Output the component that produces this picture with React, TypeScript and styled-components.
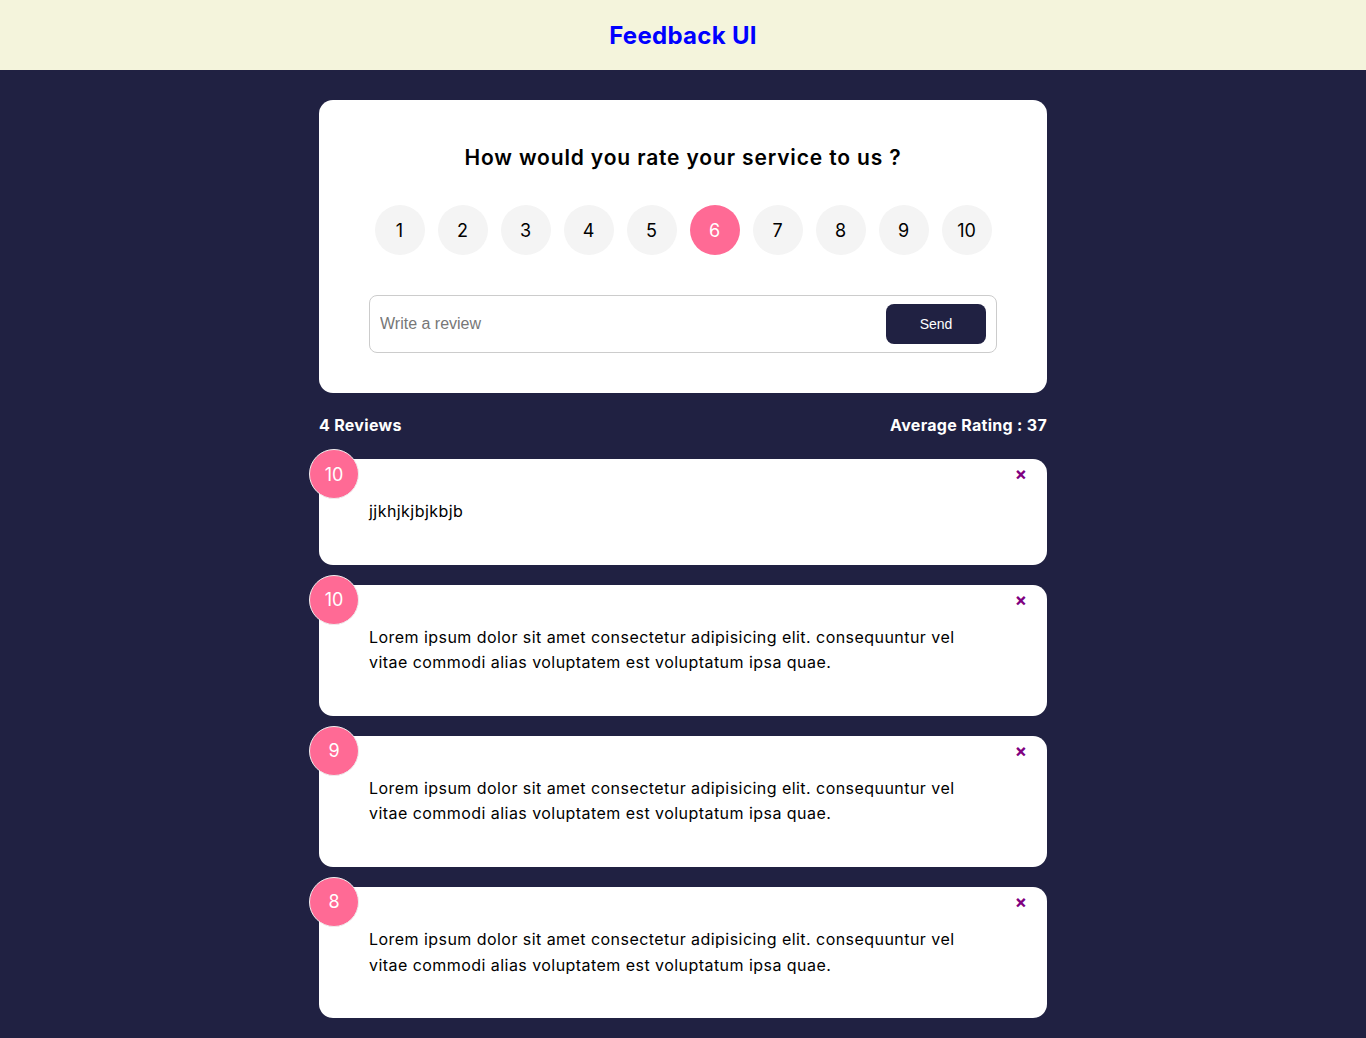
import React, { useState } from "react";
import styled, { createGlobalStyle } from "styled-components";

const GlobalStyle = createGlobalStyle`
  * { box-sizing: border-box; }
  body {
    margin: 0;
    background: #202142;
    font-family: Inter, "Noto Sans", sans-serif;
    color: #000;
  }
`;

const Header = styled.header`
  height: 70px;
  background: #f4f4dc;
  display: flex;
  align-items: center;
  justify-content: center;
`;

const Title = styled.h2`
  margin: 0;
  color: #0000ff;
  font-size: 24px;
  font-weight: 700;
  letter-spacing: 0.3px;
`;

const Container = styled.main`
  width: 728px;
  margin: 30px auto 0;
  padding-bottom: 20px;
`;

const Card = styled.div`
  background: #fff;
  border-radius: 14px;
  position: relative;
  color: #000;
`;

const FormCard = styled(Card)`
  padding: 40px 50px;
`;

const Question = styled.h2`
  margin: 0;
  text-align: center;
  font-size: 21px;
  font-weight: 600;
  line-height: 34px;
  letter-spacing: 0.85px;
  padding-top: 1px;
`;

const RatingList = styled.ul`
  list-style: none;
  margin: 30px 0 40px;
  padding: 0;
  display: flex;
  justify-content: center;
  gap: 13px;
`;

const RatingItem = styled.li<{ $selected: boolean }>`
  width: 50px;
  height: 50px;
  border-radius: 50%;
  background: ${(p) => (p.$selected ? "#ff6a95" : "#f4f4f4")};
  color: ${(p) => (p.$selected ? "#fff" : "#000")};
  display: flex;
  align-items: center;
  justify-content: center;
  font-size: 18px;
  font-weight: 400;
  cursor: pointer;
`;

const InputGroup = styled.div`
  display: flex;
  align-items: center;
  height: 58px;
  border: 1px solid #ccc;
  border-radius: 8px;
  padding: 0 10px;
`;

const Input = styled.input`
  flex: 1;
  border: none;
  outline: none;
  padding: 0;
  font-family: "Liberation Sans", Arial, sans-serif;
  font-size: 16px;
  color: #333;
  &::placeholder { color: #777; }
`;

const SendButton = styled.button`
  width: 100px;
  height: 40px;
  border: none;
  border-radius: 8px;
  background: #202142;
  color: #fff;
  font-family: "Liberation Sans", Arial, sans-serif;
  font-size: 14px;
  cursor: pointer;
`;

const Stats = styled.div`
  display: flex;
  justify-content: space-between;
  align-items: center;
  color: #fff;
  font-weight: 700;
  font-size: 16px;
  letter-spacing: 0.3px;
  height: 24px;
  margin: 20px 0 22px;
`;

const ReviewList = styled.div`
  display: flex;
  flex-direction: column;
  gap: 20px;
`;

const ReviewCard = styled(Card)`
  padding: 40px 50px;
`;

const Badge = styled.div`
  position: absolute;
  top: -10px;
  left: -10px;
  width: 50px;
  height: 50px;
  border-radius: 50%;
  background: #ff6a95;
  border: 1px solid #eee;
  color: #fff;
  display: flex;
  align-items: center;
  justify-content: center;
  font-size: 18px;
`;

const CloseButton = styled.button`
  position: absolute;
  top: 4px;
  right: 20px;
  background: none;
  border: none;
  padding: 0;
  color: #800080;
  font-size: 18px;
  font-weight: 700;
  font-family: Inter, sans-serif;
  cursor: pointer;
`;

const ReviewText = styled.p`
  margin: 0;
  font-size: 16px;
  line-height: 1.6;
  letter-spacing: 0.45px;
`;

const lorem =
  "Lorem ipsum dolor sit amet consectetur adipisicing elit. consequuntur vel vitae commodi alias voluptatem est voluptatum ipsa quae.";

const reviews = [
  { id: 1, rating: 10, text: "jjkhjkjbjkbjb" },
  { id: 2, rating: 10, text: lorem },
  { id: 3, rating: 9, text: lorem },
  { id: 4, rating: 8, text: lorem },
];

export default function App() {
  const [selected, setSelected] = useState(6);
  return (
    <>
      <GlobalStyle />
      <Header>
        <Title>Feedback UI</Title>
      </Header>
      <Container>
        <FormCard>
          <Question>How would you rate your service to us ?</Question>
          <RatingList>
            {Array.from({ length: 10 }, (_, i) => i + 1).map((n) => (
              <RatingItem key={n} $selected={n === selected} onClick={() => setSelected(n)}>
                {n}
              </RatingItem>
            ))}
          </RatingList>
          <InputGroup>
            <Input placeholder="Write a review" />
            <SendButton>Send</SendButton>
          </InputGroup>
        </FormCard>
        <Stats>
          <span>4 Reviews</span>
          <span>Average Rating : 37</span>
        </Stats>
        <ReviewList>
          {reviews.map((r) => (
            <ReviewCard key={r.id}>
              <Badge>{r.rating}</Badge>
              <CloseButton>×</CloseButton>
              <ReviewText>{r.text}</ReviewText>
            </ReviewCard>
          ))}
        </ReviewList>
      </Container>
    </>
  );
}
